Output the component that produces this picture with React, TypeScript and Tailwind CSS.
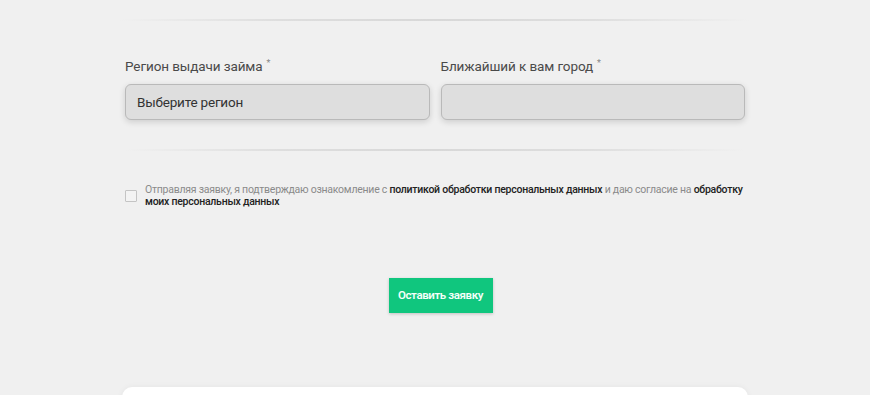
import React from 'react';

const Divider = () => (
  <div className="h-[2px] w-full bg-[linear-gradient(90deg,rgba(220,220,220,0)_0%,#dedede_25%,#d8d8d8_50%,#dedede_75%,rgba(220,220,220,0)_100%)]" />
);

const Field = ({ label, placeholder }: { label: string; placeholder?: string }) => (
  <div className="flex-1">
    <div className="text-[13.5px] leading-[20px] text-[#4a4a4a] h-[20px] tracking-[-0.1px]">
      {label}
      <sup className="text-[9px] text-[#888] ml-[4px] relative -top-[5px]">*</sup>
    </div>
    <div className="mt-[8px] h-[36px] rounded-[6px] border border-[#b9b9b9] bg-[#dedede] shadow-[0_2px_6px_rgba(0,0,0,0.15)] flex items-center px-[11px] text-[13.5px] text-[#333] tracking-[-0.2px]">
      {placeholder}
    </div>
  </div>
);

export default function App() {
  return (
    <div className="min-h-[395px] bg-[#f0f0f0] font-['Roboto','Noto_Sans',sans-serif] overflow-hidden">
      <div className="w-[630px] mx-auto pt-[19px]">
        <Divider />
      </div>
      <div className="w-[620px] mx-auto">
        <div className="flex gap-[11px] mt-[35px]">
          <Field label="Регион выдачи займа" placeholder="Выберите регион" />
          <Field label="Ближайший к вам город" />
        </div>
        <div className="mt-[29px]">
          <Divider />
        </div>
        <div className="flex items-start mt-[33px]">
          <div className="w-[12px] h-[12px] mt-[6px] border border-[#c4c4c4] bg-[#f3f3f3] rounded-[1px] shrink-0" />
          <p className="ml-[8px] w-[598px] text-[10.5px] leading-[12px] text-[#8a8a8a] tracking-[-0.25px]">
            Отправляя заявку, я подтверждаю ознакомление с{' '}
            <span className="font-medium text-[#222]">политикой обработки персональных данных</span> и даю согласие на{' '}
            <span className="font-medium text-[#222]">обработку моих персональных данных</span>
          </p>
        </div>
        <div className="flex justify-center mt-[70px] pl-[11px]">
          <button className="w-[104px] h-[35px] bg-[#10c67e] text-[#f4fff9] text-[11.5px] font-semibold tracking-[-0.4px] shadow-[0_1px_3px_rgba(0,0,0,0.2)]">
            Оставить заявку
          </button>
        </div>
      </div>
      <div className="w-[626px] mx-auto mt-[74px] h-[20px] bg-white rounded-t-[10px] shadow-[0_0_6px_rgba(0,0,0,0.05)]" />
    </div>
  );
}
